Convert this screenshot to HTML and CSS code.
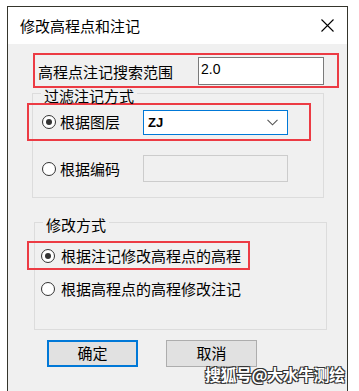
FILE: index.html
```html
<!DOCTYPE html>
<html lang="zh">
<head>
<meta charset="utf-8">
<link rel="stylesheet" href="styles.css">
</head>
<body>
<div class="dialog">
  <div class="titlebar">
    <span class="title">修改高程点和注记</span>
    <svg class="close" width="13" height="13" viewBox="0 0 13 13"><path d="M0.5 0.5 L12.5 12.5 M12.5 0.5 L0.5 12.5" stroke="#000" stroke-width="1.1" fill="none"/></svg>
  </div>
  <div class="content">
    <div class="mark search-row">
      <span class="search-label">高程点注记搜索范围</span>
      <div class="textbox">2.0</div>
    </div>
    <fieldset class="group group1">
      <legend>过滤注记方式</legend>
      <div class="mark row row-layer">
        <span class="radio checked"></span>
        <span class="opt-label">根据图层</span>
        <div class="combo"><span class="combo-text">ZJ</span>
          <svg class="chev" width="11" height="7" viewBox="0 0 11 7"><path d="M0.5 0.8 L5.5 5.8 L10.5 0.8" stroke="#555" stroke-width="1.1" fill="none"/></svg>
        </div>
      </div>
      <div class="row row-code">
        <span class="radio"></span>
        <span class="opt-label">根据编码</span>
        <div class="disabled-box"></div>
      </div>
    </fieldset>
    <fieldset class="group group2">
      <legend>修改方式</legend>
      <div class="mark row row-mod1">
        <span class="radio checked"></span>
        <span class="opt-label wide">根据注记修改高程点的高程</span>
      </div>
      <div class="row row-mod2">
        <span class="radio"></span>
        <span class="opt-label wide">根据高程点的高程修改注记</span>
      </div>
    </fieldset>
    <div class="buttons">
      <div class="btn btn-default">确定</div>
      <div class="btn">取消</div>
    </div>
  </div>
</div>
<div class="watermark">搜狐号@大水牛测绘</div>
</body>
</html>
```
FILE: styles.css
```css
* { box-sizing: border-box; }
html, body { margin: 0; padding: 0; }
body {
  background: #ffffff;
  font-family: "Noto Sans CJK SC", "Liberation Sans", sans-serif;
  font-size: 15px;
  color: #000;
  width: 359px;
  height: 391px;
  overflow: hidden;
  position: relative;
}
.dialog {
  margin: 6px 0 0 7px;
  width: 341px;
  height: 400px;
  border: 1px solid #35352c;
  background: #f0f0f0;
}
.titlebar {
  height: 37px;
  background: #ffffff;
  display: flex;
  align-items: center;
  padding: 0 13px 0 12px;
}
.title { flex: 1; font-size: 15px; line-height: 20px; margin-top: 1px; }
.close { display: block; margin-top: -1px; }
.content { padding-top: 9px; }
.mark { border: 2px solid #ec3b44; }
.search-row {
  margin-left: 25px;
  width: 306px;
  height: 35px;
  display: flex;
  align-items: center;
  padding-left: 3px;
}
.search-label { width: 160px; line-height: 20px; margin-top: 2px; }
.textbox {
  width: 126px;
  height: 28px;
  border: 1px solid #7a7a7a;
  background: #fff;
  font-family: "Liberation Sans", sans-serif;
  font-size: 14px;
  line-height: 22px;
  padding-left: 2px;
}
.group {
  margin: 0;
  padding: 0;
  border: 1px solid #dcdcdc;
  min-width: 0;
}
.group legend {
  font-size: 15px;
  line-height: 14px;
  padding: 6px 3px 0 3px;
  margin-left: 8px;
  height: 20px;
}
.group1 {
  margin-top: -5px;
  margin-left: 24px;
  width: 292px;
  padding-bottom: 15px;
}
.group2 {
  margin-top: 14px;
  margin-left: 26px;
  width: 293px;
  padding-bottom: 26px;
}
.row { display: flex; align-items: center; }
.radio {
  width: 14px;
  height: 14px;
  border: 1px solid #333;
  border-radius: 50%;
  background: #fff;
  position: relative;
  flex: none;
}
.radio.checked::after {
  content: "";
  position: absolute;
  left: 3px;
  top: 3px;
  width: 6px;
  height: 6px;
  border-radius: 50%;
  background: #333;
}
.opt-label { line-height: 20px; margin-left: 4px; width: 83px; }
.opt-label.wide { width: auto; margin-left: 6px; }
.row-layer {
  margin-left: -6px;
  width: 284px;
  height: 38px;
  padding-left: 13px;
}
.combo {
  width: 145px;
  height: 25px;
  border: 1px solid #0078d7;
  background: #fff;
  display: flex;
  align-items: center;
  padding: 0 9px 0 4px;
}
.combo-text {
  flex: 1;
  font-family: "Liberation Sans", sans-serif;
  font-weight: bold;
  font-size: 13px;
}
.chev { display: block; }
.row-code {
  margin-top: 14px;
  height: 27px;
  padding-left: 9px;
}
.disabled-box {
  width: 145px;
  height: 27px;
  border: 1px solid #cccccc;
  background: #f0f0f0;
}
.row-mod1 {
  margin-top: 9px;
  margin-left: -8px;
  width: 223px;
  height: 29px;
  padding-left: 12px;
}
.row-mod2 {
  margin-top: 5px;
  height: 28px;
  padding-left: 6px;
}
.buttons {
  display: flex;
  gap: 28px;
  margin: 10px 0 0 39px;
}
.btn {
  width: 91px;
  height: 27px;
  border: 1px solid #adadad;
  background: #e1e1e1;
  text-align: center;
  line-height: 24px;
  font-size: 15px;
}
.btn-default { border: 2px solid #0078d7; line-height: 22px; }
.watermark {
  position: absolute;
  left: 205px;
  top: 362px;
  font-size: 16px;
  font-weight: bold;
  color: #fff;
  letter-spacing: -0.5px;
  text-shadow: -1px -1px 0 #333, 1px -1px 0 #333, -1px 1px 0 #333, 1px 1px 0 #333;
}
```
